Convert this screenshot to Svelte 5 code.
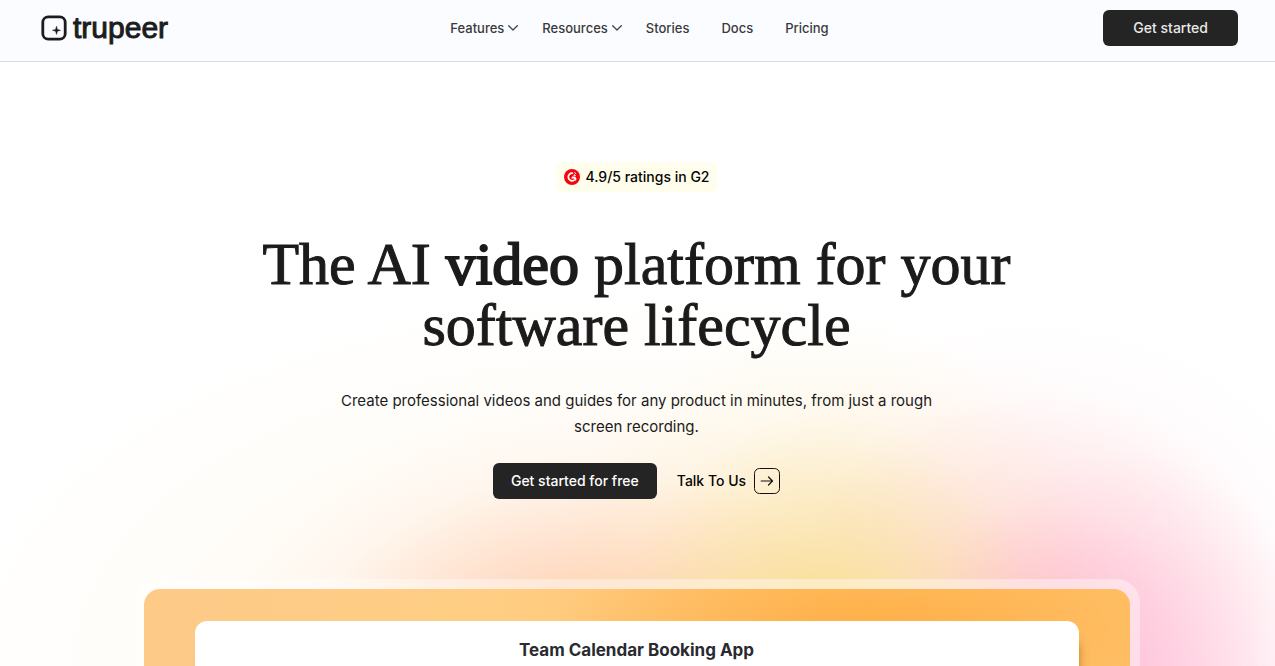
<script>
  const links = [
    { label: 'Features', menu: true },
    { label: 'Resources', menu: true },
    { label: 'Stories', menu: false },
    { label: 'Docs', menu: false },
    { label: 'Pricing', menu: false }
  ];
</script>

<div class="page">
  <header>
    <a class="logo" href="#home" aria-label="trupeer">
      <svg width="26" height="26" viewBox="0 0 26 26" aria-hidden="true">
        <rect x="1.8" y="1.8" width="22.4" height="22.4" rx="5.5" fill="none" stroke="#1c1c1e" stroke-width="2.8" />
        <path d="M15.5 11.2 16.4 14.4 19.5 15.3 16.4 16.2 15.5 19.4 14.6 16.2 11.5 15.3 14.6 14.4Z" fill="#1c1c1e" stroke="#1c1c1e" stroke-width=".5" />
      </svg>
      <span>trupeer</span>
    </a>
    <nav aria-label="Main">
      {#each links as link}
        {#if link.menu}
          <button class="item menu" type="button">
            {link.label}
            <svg width="10" height="6" viewBox="0 0 10 6" aria-hidden="true">
              <path d="M.7.7 5 5 9.3.7" fill="none" stroke="#444" stroke-width="1.3" stroke-linecap="round" stroke-linejoin="round" />
            </svg>
          </button>
        {:else}
          <a class="item" href="#{link.label.toLowerCase()}">{link.label}</a>
        {/if}
      {/each}
    </nav>
    <a class="button header-cta" href="#start">Get started</a>
  </header>

  <main>
    <p class="rating">
      <svg width="16" height="16" viewBox="0 0 16 16" aria-hidden="true">
        <circle cx="8" cy="8" r="8" fill="#f3060f" />
        <path d="M8.9 4.3A3.8 3.8 0 1 0 10.6 10.9" fill="none" stroke="#fff" stroke-width="1.7" />
        <path d="M9.8 4.2c.3-.9 1.9-.8 1.8.2 0 .8-1.7 1-1.8 2.1h2" fill="none" stroke="#fff" stroke-width=".8" />
        <path d="M8.2 7.6h3l1.4 2.3-1.3 2-1.4-2.4H7.2Z" fill="#fff" />
      </svg>
      4.9/5 ratings in G2
    </p>
    <h1>The AI <strong>video</strong> platform for your<br />software lifecycle</h1>
    <p class="lead">Create professional videos and guides for any product in minutes, from just a rough screen recording.</p>
    <div class="actions">
      <a class="button" href="#start">Get started for free</a>
      <a class="talk" href="#talk">
        Talk To Us
        <svg width="26" height="26" viewBox="0 0 26 26" aria-hidden="true">
          <rect x=".5" y=".5" width="25" height="25" rx="5" fill="none" stroke="#111" />
          <path d="M7.2 13h11.3M14.5 9l4 4-4 4" fill="none" stroke="#111" stroke-width="1.2" stroke-linecap="round" stroke-linejoin="round" />
        </svg>
      </a>
    </div>
    <section class="frame" aria-label="Product preview">
      <div class="canvas">
        <div class="app">
          <h2>Team Calendar Booking App</h2>
        </div>
      </div>
    </section>
  </main>
</div>

<style>
  :global(body) {
    margin: 0;
  }
  .page {
    display: flex;
    flex-direction: column;
    height: 100vh;
    overflow: hidden;
    box-sizing: border-box;
    font-family: Inter, "Liberation Sans", sans-serif;
    color: #1b1b1b;
    background: #fff;
  }
  a {
    color: inherit;
    text-decoration: none;
  }
  header {
    display: grid;
    grid-template-columns: 1fr auto 1fr;
    align-items: center;
    flex: none;
    padding: 0 37px 5px 41px;
    height: 56px;
    background: #fbfcff;
    border-bottom: 1px solid #d9dce3;
  }
  .logo {
    display: flex;
    align-items: center;
    gap: 6px;
    font: 400 30px/36px "Liberation Sans", sans-serif;
    -webkit-text-stroke: 1px #1c1c1e;
    color: #1c1c1e;
  }
  nav {
    display: flex;
    align-items: center;
    gap: 32px;
  }
  .item {
    display: flex;
    align-items: center;
    gap: 4px;
    padding: 0;
    border: 0;
    background: none;
    font: 500 13px/20px Inter, "Liberation Sans", sans-serif;
    color: #3a3a3c;
  }
  .menu {
    margin-right: -8px;
  }
  .button {
    display: flex;
    align-items: center;
    justify-content: center;
    box-sizing: border-box;
    height: 36px;
    padding: 0 18px;
    border-radius: 6px;
    background: #242424;
    color: #fff;
    font-size: 14px;
    line-height: 20px;
    font-weight: 500;
  }
  .header-cta {
    justify-self: end;
    padding: 0 30px;
    color: #e8e8e8;
  }
  main {
    flex: 1;
    display: flex;
    flex-direction: column;
    align-items: center;
    min-height: 0;
    padding: 100px 22px 0 20px;
    background:
      radial-gradient(ellipse 200px 240px at 88% 104%, rgba(255, 190, 222, .7), rgba(255, 190, 222, .42) 40%, rgba(255, 190, 222, .13) 75%, transparent),
      radial-gradient(ellipse 290px 320px at 65% 96%, rgba(247, 219, 120, .8), rgba(248, 222, 140, .48) 40%, rgba(250, 230, 170, .14) 72%, transparent),
      radial-gradient(ellipse 400px 280px at 47% 102%, rgba(255, 186, 140, .9), rgba(255, 196, 162, .48) 45%, rgba(255, 215, 190, .12) 75%, transparent),
      radial-gradient(ellipse 340px 330px at 81% 97%, rgba(255, 172, 182, .85), rgba(255, 195, 205, .4) 45%, rgba(255, 220, 230, .1) 78%, transparent),
      radial-gradient(ellipse 700px 380px at 50% 100%, rgba(255, 240, 215, .5), rgba(255, 244, 226, .32) 55%, transparent);
  }
  .rating {
    display: flex;
    align-items: center;
    gap: 6px;
    margin: 0;
    padding: 5px 8px;
    border-radius: 6px;
    background: #fffdeb;
    color: #050505;
    font-size: 14px;
    line-height: 20px;
    font-weight: 500;
  }
  h1 {
    margin: 42px 0 0;
    font: 400 60px/61px "Liberation Serif", serif;
    text-align: center;
    -webkit-text-stroke: 1px #1b1b1b;
  }
  h1 strong {
    -webkit-text-stroke: 2px #1b1b1b;
    font-weight: 400;
  }
  .lead {
    max-width: 620px;
    margin: 32px 0 0;
    font-size: 15px;
    line-height: 26px;
    text-align: center;
  }
  .actions {
    display: flex;
    align-items: center;
    gap: 20px;
    margin-top: 23px;
  }
  .talk {
    display: flex;
    align-items: center;
    gap: 8px;
    color: #050505;
    font-size: 14px;
    line-height: 20px;
    font-weight: 500;
  }
  .frame {
    flex: 1;
    display: flex;
    box-sizing: border-box;
    width: 100%;
    max-width: 1006px;
    margin-top: 80px;
    padding: 10px 10px 0;
    border-radius: 24px 24px 0 0;
    background: rgba(255, 255, 255, .4);
  }
  .canvas {
    flex: 1;
    display: flex;
    padding: 32px 51px 0;
    border-radius: 16px 16px 0 0;
    background:
      radial-gradient(ellipse 320px 90px at 74% 50%, #ffb048, rgba(255, 176, 72, .45) 55%, transparent),
      linear-gradient(90deg, #fdca88 0%, #ffce84 35%, #ffbd66 70%, #ffc068 100%);
  }
  .app {
    flex: 1;
    border-radius: 12px 12px 0 0;
    background: #fff;
    box-shadow: 4px 16px 10px -4px rgba(120, 70, 0, .5);
  }
  h2 {
    margin: 17px 0 0;
    font-size: 17px;
    line-height: 24px;
    font-weight: 700;
    text-align: center;
    color: #2a2a30;
  }
</style>
